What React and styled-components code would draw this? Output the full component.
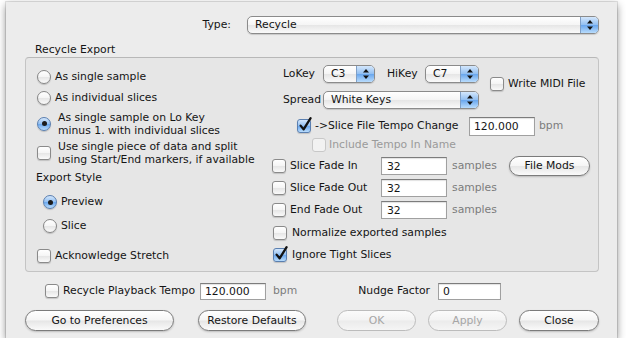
import React from "react";
import styled, { createGlobalStyle } from "styled-components";

const GlobalStyle = createGlobalStyle`
  html, body {
    margin: 0;
    padding: 0;
    background: #fff;
  }
  body {
    font-family: "DejaVu Sans", "Liberation Sans", sans-serif;
    font-size: 10.8px;
    line-height: 14px;
    color: #141414;
  }
`;

const whiteGrad = "linear-gradient(#ffffff, #f5f5f5 48%, #e6e6e6 52%, #fafafa)";
const blueGrad = "linear-gradient(#d4e7fc, #93c0f2 48%, #6aa7ee 52%, #b9dcfc)";

const Window = styled.div`
  box-sizing: border-box;
  margin: 2px 0 0 6px;
  width: 611px;
  height: 336px;
  padding: 14px 18px 0 19px;
  background: #ececec;
  box-shadow: 0 3px 8px rgba(0, 0, 0, 0.45), 0 0 0 1px rgba(0, 0, 0, 0.1);
`;

const TypeRow = styled.div`
  display: flex;
  align-items: center;
  justify-content: flex-end;
  gap: 16px;
  height: 18px;
`;

/* ---- popup button ---- */
const PopupShell = styled.div`
  box-sizing: border-box;
  display: flex;
  align-items: stretch;
  width: ${(p) => p.$w}px;
  height: 18px;
  border: 1px solid #8b8b8b;
  border-radius: 5px;
  background: ${whiteGrad};
  box-shadow: 0 1px 1px rgba(0, 0, 0, 0.15);
  overflow: hidden;
`;

const PopupValue = styled.span`
  flex: 1;
  padding-left: 7px;
  line-height: 16px;
  white-space: nowrap;
`;

const PopupArrows = styled.span`
  width: 17px;
  display: flex;
  align-items: center;
  justify-content: center;
  background: ${blueGrad};
  border-left: 1px solid #7f9fc6;
`;

const Popup = ({ w, value }) => (
  <PopupShell $w={w}>
    <PopupValue>{value}</PopupValue>
    <PopupArrows>
      <svg width="6" height="10" viewBox="0 0 6 10">
        <polygon points="3,0 6,3.6 0,3.6" fill="#111" />
        <polygon points="0,6.4 6,6.4 3,10" fill="#111" />
      </svg>
    </PopupArrows>
  </PopupShell>
);

/* ---- group box ---- */
const GroupTitle = styled.div`
  margin: 9px 0 0 10px;
  height: 14px;
`;

const GroupBox = styled.div`
  box-sizing: border-box;
  height: 215px;
  border: 1px solid #c4c4c4;
  border-top-color: #b8b8b8;
  border-radius: 4px;
  background: #e6e6e6;
  display: grid;
  grid-template-columns: 246px 1fr;
`;

const Column = styled.div`
  display: flex;
  flex-direction: column;
  padding-left: ${(p) => p.$pl || 0}px;
`;

const OptionRow = styled.div`
  display: flex;
  align-items: center;
  gap: ${(p) => (p.$gap != null ? p.$gap : 4)}px;
  height: ${(p) => p.$h || 20}px;
  margin-top: ${(p) => p.$mt || 0}px;
  padding-left: ${(p) => p.$pl || 0}px;
  white-space: nowrap;
`;

const TwoLine = styled.span`
  line-height: 13px;
  white-space: normal;
`;

const SubTitle = styled.div`
  height: 14px;
  margin-top: ${(p) => p.$mt || 0}px;
  margin-left: -1px;
`;

const Muted = styled.span`
  color: ${(p) => (p.$light ? "#9a9a9a" : "#7c7c7c")};
`;

/* ---- radio ---- */
const Radio = styled.span`
  flex: none;
  box-sizing: border-box;
  width: 14px;
  height: 14px;
  border-radius: 50%;
  border: 1px solid ${(p) => (p.$on ? "#5a7fb0" : "#868686")};
  background: ${(p) => (p.$on ? blueGrad : whiteGrad)};
  box-shadow: 0 1px 1px rgba(0, 0, 0, 0.18);
  display: flex;
  align-items: center;
  justify-content: center;
  &::after {
    content: "";
    display: ${(p) => (p.$on ? "block" : "none")};
    width: 5px;
    height: 5px;
    border-radius: 50%;
    background: #1c1c1c;
  }
`;

/* ---- checkbox ---- */
const Box = styled.span`
  position: relative;
  flex: none;
  box-sizing: border-box;
  width: 14px;
  height: 14px;
  border: 1px solid ${(p) => (p.$off ? "#c8c8c8" : p.$on ? "#5a7fb0" : "#8a8a8a")};
  border-radius: 3px;
  background: ${(p) => (p.$on ? blueGrad : p.$off ? "#f2f2f2" : whiteGrad)};
  box-shadow: ${(p) => (p.$off ? "none" : "0 1px 1px rgba(0, 0, 0, 0.16)")};
`;

const CheckMark = styled.svg`
  position: absolute;
  left: 0;
  top: -4px;
`;

const CheckBox = ({ on, off }) => (
  <Box $on={on} $off={off}>
    {on && (
      <CheckMark width="15" height="16" viewBox="0 0 15 16">
        <path
          d="M2.6 9.6 L5.6 13.4 L12.6 2.2"
          fill="none"
          stroke="#121212"
          strokeWidth="2.3"
          strokeLinecap="round"
          strokeLinejoin="round"
        />
      </CheckMark>
    )}
  </Box>
);

/* ---- text field ---- */
const TextField = styled.input`
  box-sizing: border-box;
  width: ${(p) => p.$w}px;
  height: ${(p) => p.$h || 18}px;
  margin: 0;
  padding: 0 0 0 ${(p) => p.$pad || 4}px;
  border: 1px solid #a0a0a0;
  border-top-color: #7c7c7c;
  background: #fff;
  box-shadow: inset 0 1px 1px rgba(0, 0, 0, 0.12);
  font: inherit;
  color: #141414;
  outline: none;
`;

/* ---- right column ---- */
const KeysBlock = styled.div`
  display: flex;
  margin-top: 6px;
`;

const KeyLabel = styled.span`
  box-sizing: border-box;
  width: ${(p) => p.$w}px;
  padding-left: ${(p) => p.$pl || 0}px;
  flex: none;
`;

const MidiRow = styled.div`
  display: flex;
  align-items: center;
  gap: 4px;
  height: 14px;
  margin: 13px 0 0 11px;
  white-space: nowrap;
`;

const FieldRow = styled.div`
  display: grid;
  grid-template-columns: ${(p) => p.$cols};
  align-items: center;
  height: 20px;
  margin-top: ${(p) => p.$mt || 0}px;
  padding-left: ${(p) => p.$pl || 0}px;
  white-space: nowrap;
`;

const CheckLabel = styled.span`
  display: flex;
  align-items: center;
  gap: 4px;
`;

const UnitCell = styled.span`
  padding-left: ${(p) => p.$pl || 4}px;
`;

const RightCell = styled.span`
  text-align: right;
  padding-right: 8px;
`;

/* ---- buttons ---- */
const PushButton = styled.button`
  box-sizing: border-box;
  width: ${(p) => p.$w}px;
  height: ${(p) => p.$h || 21}px;
  margin: 0;
  padding: 0;
  border-radius: 11px;
  border: 1px solid #7b7b7b;
  background: ${whiteGrad};
  box-shadow: 0 1px 2px rgba(0, 0, 0, 0.2);
  font: inherit;
  color: #141414;
  &:disabled {
    border-color: #bcbcbc;
    color: #a6a6a6;
    background: linear-gradient(#fbfbfb, #f3f3f3 48%, #ebebeb 52%, #f5f5f5);
    box-shadow: none;
  }
`;

const BottomRow = styled(FieldRow)`
  margin-top: 9px;
`;

const ButtonRow = styled.div`
  display: flex;
  justify-content: space-between;
  margin-top: 9px;
`;

const ButtonGroup = styled.div`
  display: flex;
  gap: ${(p) => p.$gap}px;
`;

export default function App() {
  return (
    <>
      <GlobalStyle />
      <Window>
        <TypeRow>
          <span>Type:</span>
          <Popup w={352} value="Recycle" />
        </TypeRow>

        <GroupTitle>Recycle Export</GroupTitle>
        <GroupBox>
          <Column $pl={11}>
            <OptionRow $mt={9}>
              <Radio />
              <span>As single sample</span>
            </OptionRow>
            <OptionRow $mt={1}>
              <Radio />
              <span>As individual slices</span>
            </OptionRow>
            <OptionRow $mt={2} $h={27} $gap={7}>
              <Radio $on />
              <TwoLine>
                As single sample on Lo Key
                <br />
                minus 1. with individual slices
              </TwoLine>
            </OptionRow>
            <OptionRow $mt={2} $h={27} $gap={7}>
              <CheckBox />
              <TwoLine>
                Use single piece of data and split
                <br />
                using Start/End markers, if available
              </TwoLine>
            </OptionRow>
            <SubTitle $mt={5}>Export Style</SubTitle>
            <OptionRow $mt={7} $pl={6}>
              <Radio $on />
              <span>Preview</span>
            </OptionRow>
            <OptionRow $mt={4} $pl={6}>
              <Radio />
              <span>Slice</span>
            </OptionRow>
            <OptionRow $mt={10}>
              <CheckBox />
              <span>Acknowledge Stretch</span>
            </OptionRow>
          </Column>

          <Column>
            <KeysBlock>
              <Column $pl={11}>
                <OptionRow $gap={0}>
                  <KeyLabel $w={40}>LoKey</KeyLabel>
                  <Popup w={52} value="C3" />
                  <KeyLabel $w={50} $pl={12}>
                    HiKey
                  </KeyLabel>
                  <Popup w={54} value="C7" />
                </OptionRow>
                <OptionRow $mt={6} $gap={0}>
                  <KeyLabel $w={40}>Spread</KeyLabel>
                  <Popup w={156} value="White Keys" />
                </OptionRow>
              </Column>
              <MidiRow>
                <CheckBox />
                <span>Write MIDI File</span>
              </MidiRow>
            </KeysBlock>

            <FieldRow $mt={6} $pl={25} $cols="172px 66px auto">
              <CheckLabel>
                <CheckBox on />
                <span>-&gt;Slice File Tempo Change</span>
              </CheckLabel>
              <TextField $w={66} $h={19} readOnly value="120.000" />
              <UnitCell>
                <Muted>bpm</Muted>
              </UnitCell>
            </FieldRow>
            <OptionRow $h={18} $pl={40} $gap={3}>
              <CheckBox off />
              <Muted $light>Include Tempo In Name</Muted>
            </OptionRow>

            <FieldRow $mt={2} $cols="109px 66px 62px 81px">
              <CheckLabel>
                <CheckBox />
                <span>Slice Fade In</span>
              </CheckLabel>
              <TextField $w={66} $pad={5} readOnly value="32" />
              <UnitCell $pl={5}>
                <Muted>samples</Muted>
              </UnitCell>
              <PushButton $w={81} $h={20}>File Mods</PushButton>
            </FieldRow>
            <FieldRow $mt={2} $cols="109px 66px 62px">
              <CheckLabel>
                <CheckBox />
                <span>Slice Fade Out</span>
              </CheckLabel>
              <TextField $w={66} $pad={5} readOnly value="32" />
              <UnitCell $pl={5}>
                <Muted>samples</Muted>
              </UnitCell>
            </FieldRow>
            <FieldRow $mt={2} $cols="109px 66px 62px">
              <CheckLabel>
                <CheckBox />
                <span>End Fade Out</span>
              </CheckLabel>
              <TextField $w={66} $pad={5} readOnly value="32" />
              <UnitCell $pl={5}>
                <Muted>samples</Muted>
              </UnitCell>
            </FieldRow>
            <OptionRow $mt={3} $pl={1} $gap={5}>
              <CheckBox />
              <span>Normalize exported samples</span>
            </OptionRow>
            <OptionRow $mt={2} $pl={1} $gap={5}>
              <CheckBox on />
              <span>Ignore Tight Slices</span>
            </OptionRow>
          </Column>
        </GroupBox>

        <BottomRow $pl={20} $cols="155px 66px 87px 85px 63px">
          <CheckLabel>
            <CheckBox />
            <span>Recycle Playback Tempo</span>
          </CheckLabel>
          <TextField $w={66} $h={17} readOnly value="120.000" />
          <UnitCell $pl={7}>
            <Muted>bpm</Muted>
          </UnitCell>
          <RightCell>Nudge Factor</RightCell>
          <TextField $w={63} $h={17} readOnly value="0" />
        </BottomRow>

        <ButtonRow>
          <ButtonGroup $gap={24}>
            <PushButton $w={149}>Go to Preferences</PushButton>
            <PushButton $w={108}>Restore Defaults</PushButton>
          </ButtonGroup>
          <ButtonGroup $gap={12}>
            <PushButton $w={79} disabled>
              OK
            </PushButton>
            <PushButton $w={79} disabled>
              Apply
            </PushButton>
            <PushButton $w={80}>Close</PushButton>
          </ButtonGroup>
        </ButtonRow>
      </Window>
    </>
  );
}
